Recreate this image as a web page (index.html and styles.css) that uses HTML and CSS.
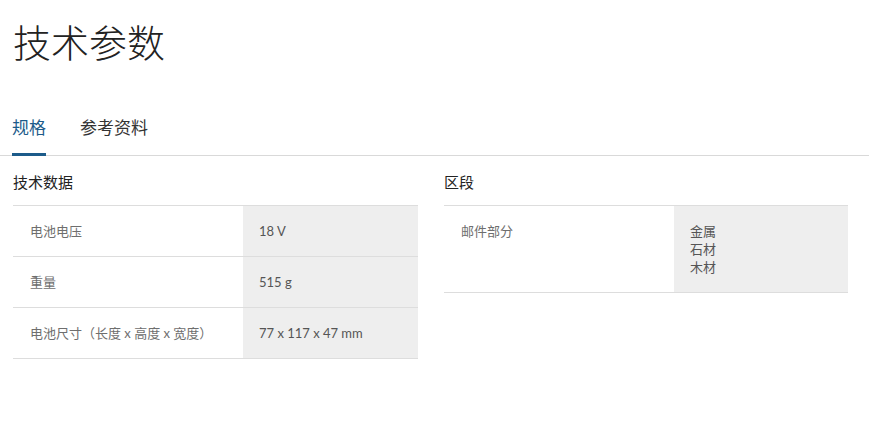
FILE: index.html
```html
<!DOCTYPE html>
<html lang="zh">
<head>
<meta charset="utf-8">
<link rel="stylesheet" href="styles.css">
</head>
<body>
<h1 class="title">技术参数</h1>
<nav class="tabs">
  <span class="tab active">规格</span>
  <span class="tab">参考资料</span>
</nav>
<div class="sections">
  <section class="section">
    <h2 class="section-title">技术数据</h2>
    <div class="table">
      <div class="row"><div class="label">电池电压</div><div class="value">18 V</div></div>
      <div class="row"><div class="label">重量</div><div class="value">515 g</div></div>
      <div class="row"><div class="label">电池尺寸（长度 x 高度 x 宽度）</div><div class="value">77 x 117 x 47 mm</div></div>
    </div>
  </section>
  <section class="section">
    <h2 class="section-title">区段</h2>
    <div class="table">
      <div class="row"><div class="label">邮件部分</div><div class="value">金属<br>石材<br>木材</div></div>
    </div>
  </section>
</div>
</body>
</html>
```
FILE: styles.css
```css
html, body {
  margin: 0;
  padding: 0;
  background: #fff;
}
body {
  font-family: "Lato", "Noto Sans CJK SC", sans-serif;
  color: #333;
}
.title {
  margin: 0;
  padding: 19px 0 0 13px;
  font-size: 38px;
  line-height: 46px;
  font-weight: 300;
  color: #222;
}
.tabs {
  display: flex;
  gap: 34px;
  margin-top: 48px;
  padding-left: 12px;
  border-bottom: 1px solid #d9d9d9;
}
.tab {
  font-size: 17px;
  line-height: 24px;
  padding: 3px 0 12px;
  color: #333;
  border-bottom: 3px solid transparent;
}
.tab.active {
  color: #1c5b8a;
  border-bottom-color: #1c5b8a;
  margin-bottom: -1px;
}
.sections {
  display: grid;
  grid-template-columns: 405px 404px;
  column-gap: 26px;
  padding: 18px 0 0 13px;
}
.section-title {
  margin: 0 0 15px;
  font-size: 15px;
  line-height: 16px;
  font-weight: 400;
  color: #222;
}
.table {
  border-top: 1px solid #dddddd;
}
.row {
  display: grid;
  grid-template-columns: 230px 1fr;
  border-bottom: 1px solid #dddddd;
  font-size: 13px;
  line-height: 18px;
}
.label {
  padding: 16px 17px 16px 17px;
  color: #6e6e6e;
}
.value {
  padding: 16px 16px;
  background: #eeeeee;
  color: #555555;
}
```
